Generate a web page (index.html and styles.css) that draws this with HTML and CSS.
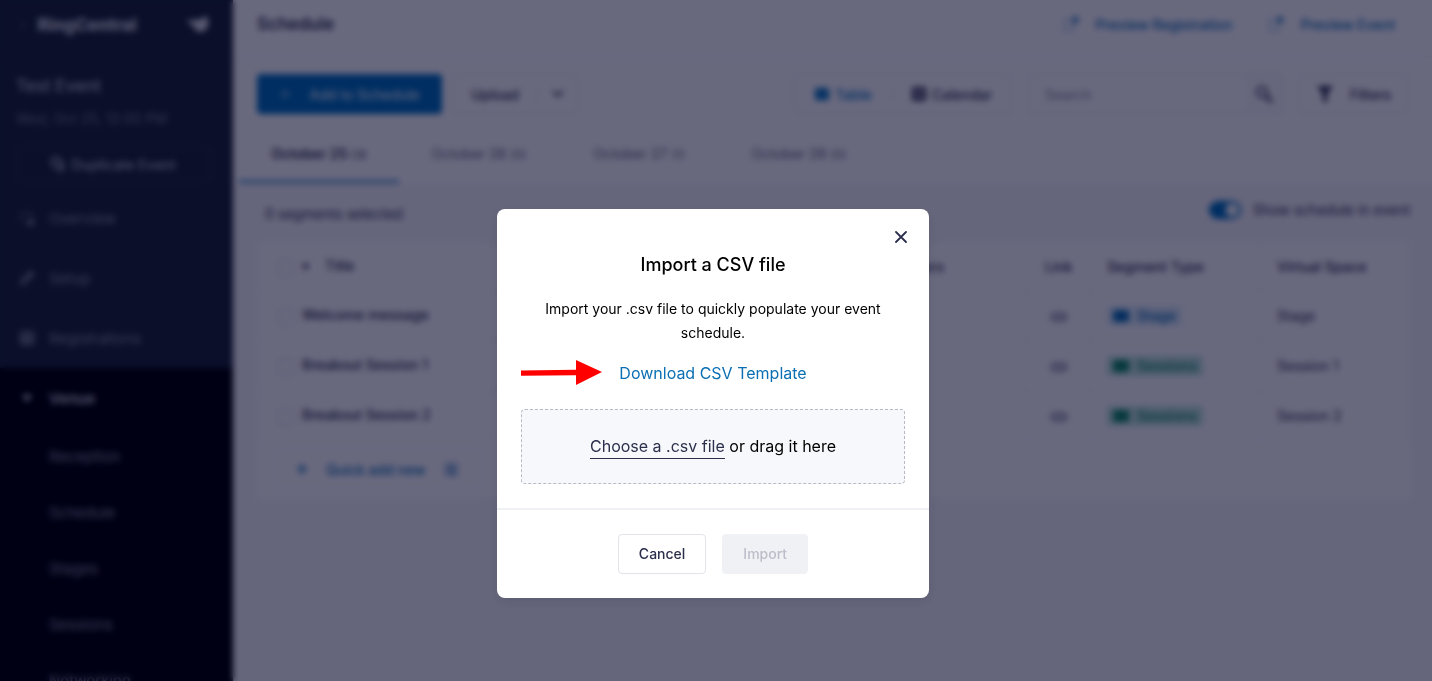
FILE: index.html
```html
<!DOCTYPE html>
<html lang="en">
<head>
  <meta charset="UTF-8">
  <meta name="viewport" content="width=device-width, initial-scale=1.0">
  <title>Schedule</title>
  <link rel="stylesheet" href="styles.css">
</head>
<body>
  <div class="app" inert>
    <aside class="sidebar">
      <div class="brand">
        <span class="brand-back">‹</span>
        <span class="brand-name">RingCentral</span>
        <svg class="brand-icon" width="22" height="18" viewBox="0 0 22 18"><path d="M0 4h10l4-1 3-2h4v10l-4 4-5 1-4-2v-3l-5-3z" fill="currentColor"/></svg>
      </div>
      <div class="event">
        <h2>Test Event</h2>
        <p>Wed, Oct 25, 12:00 PM</p>
        <button class="duplicate" type="button">
          <svg width="14" height="14" viewBox="0 0 14 14" fill="none" stroke="currentColor" stroke-width="2"><rect x="1" y="1" width="8" height="8" rx="1"/><path d="M12 5v8H5"/></svg>
          Duplicate Event
        </button>
      </div>
      <nav>
        <a class="nav-item" href="#">
          <svg width="16" height="16" viewBox="0 0 16 16" fill="none" stroke="currentColor" stroke-width="1"><path d="M2 12V3h11v5"/><path d="M9 10h5v5H9z" fill="currentColor"/></svg>
          Overview
        </a>
        <a class="nav-item" href="#">
          <svg width="16" height="16" viewBox="0 0 16 16" fill="none" stroke="currentColor" stroke-width="2"><path d="M2 14l1-4 9-8 2 2-8 9z"/><path d="M10 2l4 4" stroke-width="3"/></svg>
          Setup
        </a>
        <a class="nav-item" href="#">
          <svg width="16" height="16" viewBox="0 0 16 16" fill="none" stroke="currentColor" stroke-width="2"><rect x="2" y="2" width="12" height="12" rx="2"/><path d="M2 6h12M2 10h12M8 6v8"/></svg>
          Registrations
        </a>
        <div class="nav-group">
          <a class="nav-parent" href="#">
            <svg width="16" height="16" viewBox="0 0 16 16"><path d="M3 5h10l-5 7z" fill="currentColor"/></svg>
            Venue
          </a>
          <a class="nav-sub" href="#">Reception</a>
          <a class="nav-sub" href="#">Schedule</a>
          <a class="nav-sub" href="#">Stages</a>
          <a class="nav-sub" href="#">Sessions</a>
          <a class="nav-sub" href="#">Networking</a>
        </div>
      </nav>
    </aside>

    <main class="main">
      <header class="topbar">
        <h1>Schedule</h1>
        <div class="topbar-links">
          <a href="#">
            <svg width="16" height="16" viewBox="0 0 16 16" fill="none" stroke="currentColor"><path d="M6 3H1v12h10v-5" stroke-opacity=".6"/><path d="M9 2h5v5M14 2L8 8" stroke-width="2"/></svg>
            Preview Registration
          </a>
          <a href="#">
            <svg width="16" height="16" viewBox="0 0 16 16" fill="none" stroke="currentColor"><path d="M6 3H1v12h10v-5" stroke-opacity=".6"/><path d="M9 2h5v5M14 2L8 8" stroke-width="2"/></svg>
            Preview Event
          </a>
        </div>
      </header>

      <div class="toolbar">
        <button class="btn-add" type="button">
          <svg width="12" height="12" viewBox="0 0 12 12" stroke="currentColor"><path d="M6 1v10M1 6h10"/></svg>
          Add to Schedule
        </button>
        <div class="split">
          <button class="split-main" type="button">Upload</button>
          <button class="split-arrow" type="button" aria-label="More">
            <svg width="12" height="12" viewBox="0 0 12 12" fill="none" stroke="currentColor" stroke-width="2"><path d="M1 3l5 5 5-5"/></svg>
          </button>
        </div>
        <div class="view-switch">
          <button class="view active" type="button">
            <svg width="14" height="12" viewBox="0 0 14 12"><path d="M0 0h14v12H0zM2 5h4v1H2zM8 5h4v1H8z" fill="currentColor" fill-rule="evenodd"/></svg>
            Table
          </button>
          <button class="view" type="button">
            <svg width="14" height="14" viewBox="0 0 14 14"><path d="M0 0h14v14H0zM3 3h3v3H3zM8 3h3v3H8zM3 8h3v3H3zM8 8h3v3H8z" fill="currentColor" fill-rule="evenodd"/></svg>
            Calendar
          </button>
        </div>
        <div class="search">
          <input type="text" placeholder="Search" aria-label="Search">
          <button type="button" aria-label="Search">
            <svg width="18" height="18" viewBox="0 0 18 18" fill="none" stroke="currentColor" stroke-width="2"><circle cx="7" cy="7" r="5"/><path d="M11 11l6 6" stroke-width="3"/></svg>
          </button>
        </div>
        <button class="filters" type="button">
          <svg width="18" height="18" viewBox="0 0 18 18"><path d="M1 1h16l-6 8v8H7V9z" fill="currentColor"/></svg>
          Filters
        </button>
      </div>

      <nav class="tabs">
        <a class="tab active" href="#">October 25 <small>(3)</small></a>
        <a class="tab" href="#">October 26 <small>(0)</small></a>
        <a class="tab" href="#">October 27 <small>(1)</small></a>
        <a class="tab" href="#">October 28 <small>(0)</small></a>
      </nav>

      <section class="content">
        <div class="content-head">
          <span>0 segments selected</span>
          <label class="toggle">
            <input type="checkbox" checked>
            Show schedule in event
          </label>
        </div>

        <div class="card">
          <table>
            <colgroup>
              <col class="col-title">
              <col>
              <col class="col-link">
              <col class="col-type">
              <col class="col-space">
            </colgroup>
            <thead>
              <tr>
                <th><input type="checkbox" aria-label="Select all"><span class="caret">▾</span>Title</th>
                <th class="speakers">Speakers</th>
                <th class="center">Link</th>
                <th>Segment Type</th>
                <th>Virtual Space</th>
              </tr>
            </thead>
            <tbody>
              <tr>
                <td><input type="checkbox" aria-label="Welcome message">Welcome message</td>
                <td></td>
                <td class="center"><span class="link-icon"></span></td>
                <td><span class="tag tag-stage"><i></i>Stage</span></td>
                <td class="space">Stage</td>
              </tr>
              <tr>
                <td><input type="checkbox" aria-label="Breakout Session 1">Breakout Session 1</td>
                <td></td>
                <td class="center"><span class="link-icon"></span></td>
                <td><span class="tag tag-session"><i></i>Sessions</span></td>
                <td class="space">Session 1</td>
              </tr>
              <tr>
                <td><input type="checkbox" aria-label="Breakout Session 2">Breakout Session 2</td>
                <td></td>
                <td class="center"><span class="link-icon"></span></td>
                <td><span class="tag tag-session"><i></i>Sessions</span></td>
                <td class="space">Session 2</td>
              </tr>
            </tbody>
          </table>
          <button class="quick-add" type="button">
            <svg width="12" height="12" viewBox="0 0 12 12" stroke="currentColor" stroke-width="2"><path d="M6 1v10M1 6h10"/></svg>
            Quick add new
            <kbd>Q</kbd>
          </button>
        </div>
      </section>
    </main>
  </div>

  <div class="overlay">
    <div class="modal" role="dialog" aria-labelledby="modal-title">
      <button class="close" type="button" aria-label="Close">
        <svg width="12" height="12" viewBox="0 0 12 12" fill="none" stroke="currentColor" stroke-width="1.8" stroke-linecap="round"><path d="M1 1l10 10M11 1L1 11"/></svg>
      </button>
      <div class="modal-body">
        <h2 id="modal-title">Import a CSV file</h2>
        <p>Import your .csv file to quickly populate your event schedule.</p>
        <div class="download">
          <svg class="arrow" width="82" height="26" viewBox="0 0 82 26"><path d="M0 10.5l55-.8V0l26 12L55 25v-9.8l-55 .6z" fill="#ff0000"/></svg>
          <a href="#">Download CSV Template</a>
        </div>
        <div class="dropzone">
          <input class="file-input" type="file" id="csv-file" accept=".csv">
          <div><label for="csv-file">Choose a .csv file</label> or drag it here</div>
        </div>
      </div>
      <div class="modal-footer">
        <button class="btn-cancel" type="button">Cancel</button>
        <button class="btn-import" type="button" disabled>Import</button>
      </div>
    </div>
  </div>
</body>
</html>
```

FILE: styles.css
```css
* {
  box-sizing: border-box;
}

body {
  margin: 0;
  font-family: Inter, "Liberation Sans", sans-serif;
  font-size: 14px;
  color: #2b2f4c;
  overflow: hidden;
}

h1, h2, p {
  margin: 0;
}

a {
  color: inherit;
  text-decoration: none;
}

button, input {
  font: inherit;
  color: inherit;
}

button {
  background: none;
  border: none;
  padding: 0;
}

svg {
  flex: none;
}

.app {
  display: flex;
  height: 100vh;
  overflow: hidden;
}

/* Sidebar */
.sidebar {
  width: 233px;
  flex: none;
  background: #1b2533;
  color: #8b8f9f;
}

.brand {
  display: flex;
  align-items: center;
  gap: 12px;
  height: 58px;
  padding: 0 24px 8px 20px;
  border-bottom: 1px solid #28313f;
  color: #d4d6de;
}

.brand-back {
  color: #70768a;
}

.brand-name {
  flex: 1;
  font-size: 17px;
  font-weight: 800;
}

.event {
  padding: 16px 22px 7px 16px;
}

.event h2 {
  font-size: 17px;
  font-weight: 500;
  line-height: 24px;
  color: #b4b6c2;
}

.event p {
  margin: 9px 0 16px;
  line-height: 24px;
  color: #777c8c;
}

.duplicate {
  display: flex;
  align-items: center;
  justify-content: center;
  gap: 6px;
  width: 100%;
  height: 34px;
  border: 1px solid #434b5c;
  border-radius: 4px;
  font-weight: 500;
  color: #b0b3be;
}

.nav-item, .nav-parent {
  display: flex;
  align-items: center;
  gap: 14px;
  height: 60px;
  padding-left: 19px;
  font-size: 15px;
}

.nav-group {
  background: #000000;
}

.nav-parent {
  font-weight: 600;
  color: #c6c8d2;
}

.nav-sub {
  display: flex;
  align-items: center;
  height: 56px;
  padding-left: 49px;
  font-size: 15px;
}

/* Main area */
.main {
  flex: 1;
  display: flex;
  flex-direction: column;
  min-width: 0;
  background: #ffffff;
}

.topbar {
  display: flex;
  justify-content: space-between;
  align-items: center;
  height: 57px;
  padding: 0 37px 8px 24px;
  border-bottom: 1px solid #ececf2;
}

.topbar h1 {
  font-size: 17px;
  font-weight: 600;
}

.topbar-links {
  display: flex;
  gap: 36px;
  font-weight: 500;
  color: #0b6fb3;
}

.topbar-links a {
  display: flex;
  align-items: center;
  gap: 16px;
}

.toolbar {
  display: flex;
  align-items: center;
  padding: 17px 24px 12px;
}

.btn-add {
  display: flex;
  align-items: center;
  justify-content: center;
  gap: 18px;
  width: 185px;
  height: 40px;
  border-radius: 4px;
  background: #0070bc;
  color: #d8e8f6;
  font-weight: 500;
}

.split, .view-switch, .search, .filters {
  display: flex;
  align-items: center;
  height: 40px;
  border: 1px solid #e2e3ea;
  border-radius: 4px;
}

.split {
  margin-left: 10px;
}

.split-main {
  width: 84px;
  font-weight: 500;
}

.split-arrow {
  width: 40px;
  border-left: 1px solid #e2e3ea;
}

.view-switch {
  margin-left: auto;
}

.view {
  display: flex;
  align-items: center;
  justify-content: center;
  gap: 6px;
  width: 118px;
  font-weight: 500;
}

.view.active {
  width: 98px;
  border-right: 1px solid #e2e3ea;
  color: #0070bc;
}

.search {
  width: 255px;
  margin: 0 16px;
}

.search input {
  flex: 1;
  min-width: 0;
  padding: 0 0 0 16px;
  border: none;
  background: none;
}

.search input::placeholder {
  color: #85879c;
}

.search button {
  display: flex;
  align-items: center;
  justify-content: center;
  width: 36px;
  height: 38px;
  background: #f8f8fa;
}

.filters {
  justify-content: center;
  gap: 16px;
  width: 109px;
  font-weight: 500;
}

.tabs {
  display: flex;
  height: 57px;
  padding-left: 6px;
}

.tab {
  width: 160px;
  padding-top: 19px;
  text-align: center;
  color: #62647c;
}

.tab small {
  font-size: 12px;
  font-weight: 400;
}

.tab.active {
  border-bottom: 3px solid #4a94cc;
  font-weight: 600;
  color: #2b2f4c;
}

.content {
  flex: 1;
  padding: 14px 22px 0 24px;
  background: #f6f6f9;
}

.content-head {
  display: flex;
  justify-content: space-between;
  height: 45px;
  padding-left: 8px;
  line-height: 34px;
}

.toggle {
  display: flex;
  align-items: center;
  gap: 12px;
  height: 26px;
}

.toggle input {
  appearance: none;
  width: 32px;
  height: 18px;
  margin: 0;
  border-radius: 9px;
  background: radial-gradient(circle at 23px 9px, #ffffff 6px, #0070bc 7px);
}

.card {
  height: 256px;
  background: #ffffff;
}

table {
  width: 100%;
  table-layout: fixed;
  border-collapse: collapse;
}

.col-title {
  width: 236px;
}

.col-link {
  width: 64px;
}

.col-type {
  width: 170px;
}

.col-space {
  width: 149px;
}

th, td {
  height: 50px;
  padding: 0 0 0 16px;
  border: 1px solid #f4f4f8;
  text-align: left;
  font-weight: 500;
}

th {
  height: 48px;
}

th:first-child, td:first-child {
  padding-left: 20px;
}

th input, td input {
  appearance: none;
  width: 16px;
  height: 16px;
  margin: 0 8px 0 0;
  border: 1px solid #c4c5d0;
  border-radius: 3px;
  vertical-align: middle;
}

.caret {
  margin-right: 16px;
}

.speakers {
  padding-right: 82px;
  text-align: right;
}

.center {
  padding: 0;
  text-align: center;
}

.space {
  font-weight: 400;
}

.link-icon {
  display: inline-block;
  width: 18px;
  height: 10px;
  border: 2px solid #9a9caf;
  border-radius: 5px;
  background: #c4c5d0;
  vertical-align: middle;
}

.tag {
  display: inline-flex;
  align-items: center;
  gap: 8px;
  height: 20px;
  padding: 0 6px;
  border-radius: 3px;
  vertical-align: middle;
}

.tag i {
  width: 16px;
  height: 12px;
  border-radius: 3px;
  background: currentColor;
}

.tag-stage {
  background: #deedf8;
  color: #0b6fb3;
}

.tag-session {
  background: #bfe6dd;
  color: #0f8a62;
}

.quick-add {
  display: flex;
  align-items: center;
  gap: 18px;
  height: 40px;
  margin: 8px 0 0 16px;
  padding: 0 22px;
  border: 1px solid #f0f1f5;
  border-radius: 4px;
  font-weight: 500;
  color: #0b6fb3;
}

.quick-add kbd {
  padding: 1px 3px;
  border-radius: 3px;
  background: #d9e4f1;
  font: inherit;
  font-size: 12px;
}

/* Modal */
.overlay {
  position: fixed;
  inset: 0;
  display: flex;
  align-items: center;
  justify-content: center;
  padding: 126px 6px 0 0;
  background: rgba(0, 0, 36, 0.59);
  backdrop-filter: blur(3px);
}

.modal {
  position: relative;
  width: 432px;
  border-radius: 8px;
  background: #ffffff;
  box-shadow: 0 4px 12px rgba(0, 0, 36, 0.1);
  color: #000000;
}

.close {
  position: absolute;
  top: 14px;
  right: 14px;
  display: flex;
  align-items: center;
  justify-content: center;
  width: 28px;
  height: 28px;
  color: #2b2f4c;
}

.modal-body {
  padding: 42px 24px 24px;
  text-align: center;
}

.modal-body h2 {
  font-size: 18px;
  font-weight: 500;
  line-height: 28px;
}

.modal-body p {
  margin: 18px 0 16px;
  line-height: 24px;
}

.download {
  position: relative;
  margin-bottom: 24px;
  font-size: 16px;
  line-height: 24px;
  color: #0b6fb3;
}

.arrow {
  position: absolute;
  left: 0;
  top: -1px;
}

.dropzone {
  display: flex;
  align-items: center;
  justify-content: center;
  min-height: 75px;
  padding-bottom: 2px;
  border: 1px dashed #b8bac6;
  border-radius: 4px;
  background: #f7f8fb;
  font-size: 16px;
  line-height: 20px;
}

.dropzone label {
  padding-bottom: 2px;
  border-bottom: 1px solid #2b2f4c;
  color: #2b2f4c;
}

.file-input {
  position: absolute;
  width: 1px;
  height: 1px;
  opacity: 0;
}

.modal-footer {
  display: flex;
  justify-content: center;
  gap: 16px;
  padding: 24px;
  border-top: 2px solid #f0f1f5;
}

.modal-footer button {
  height: 40px;
  padding: 0 20px 2px;
  border: 1px solid #e2e3ea;
  border-radius: 4px;
  font-weight: 500;
}

.btn-cancel {
  color: #2b2f4c;
}

.modal-footer .btn-import {
  border-color: #f0f1f5;
  background: #f0f1f5;
  color: #bcbec9;
}
```
